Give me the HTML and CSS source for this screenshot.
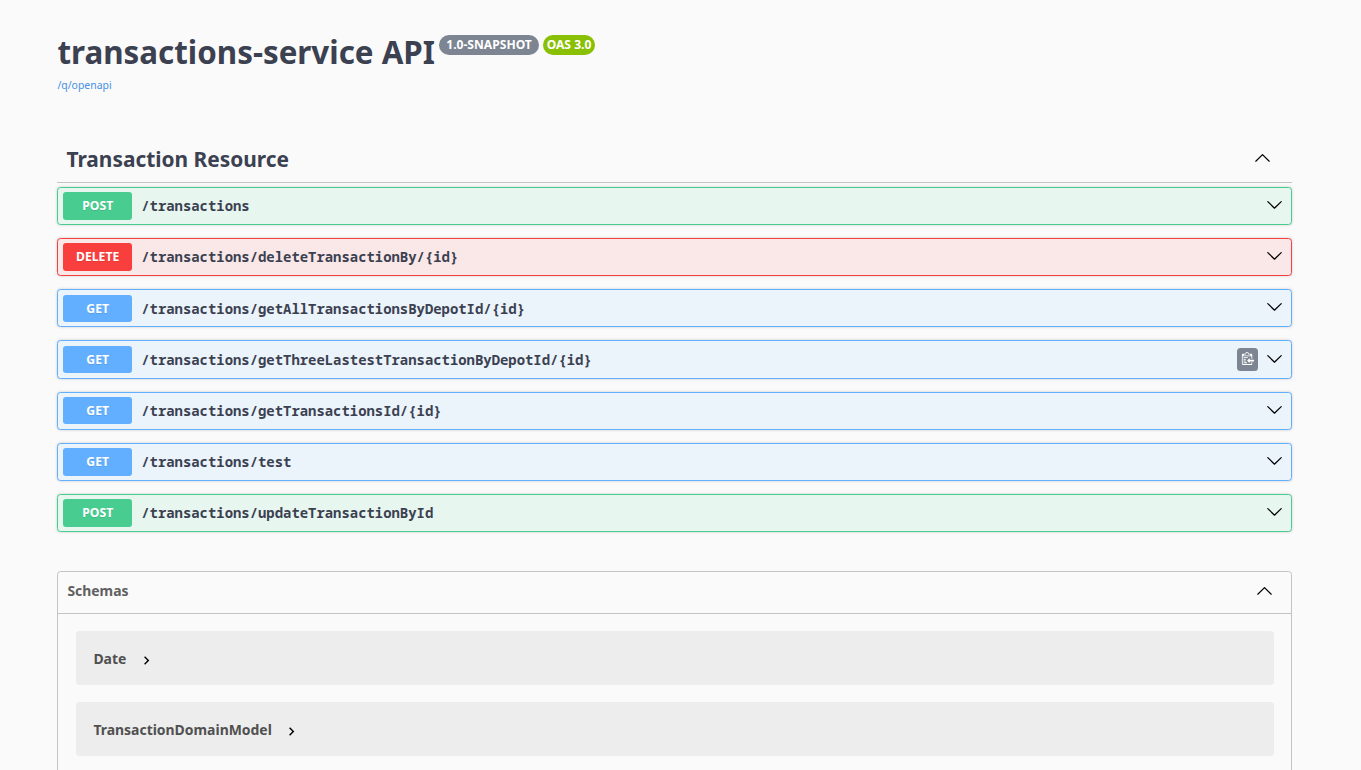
FILE: index.html
```
<!DOCTYPE html>
<html lang="en">
<head>
<meta charset="utf-8">
<title>transactions-service API</title>
<link rel="stylesheet" href="styles.css">
</head>
<body>
<svg class="defs" aria-hidden="true">
  <symbol id="down" viewBox="0 0 20 20"><path d="M17.418 6.109c.272-.268.709-.268.979 0s.271.701 0 .969l-7.908 7.83c-.27.268-.707.268-.979 0l-7.908-7.83c-.27-.268-.27-.701 0-.969s.709-.268.979 0L10 13.25l7.418-7.141z"/></symbol>
  <symbol id="up" viewBox="0 0 20 20"><path d="M17.418 14.908c.272.27.709.27.979 0s.271-.697 0-.969l-7.908-7.83c-.27-.268-.707-.268-.979 0l-7.908 7.83c-.27.268-.27.701 0 .969s.709.268.979 0L10 7.767l7.418 7.141z"/></symbol>
  <symbol id="next" viewBox="0 0 24 24"><path d="M10 6L8.59 7.41 13.17 12l-4.58 4.59L10 18l6-6z"/></symbol>
</svg>
<main class="wrapper">
  <header class="info">
    <h1 class="title">transactions-service API</h1>
    <span class="badge badge-version">1.0-SNAPSHOT</span>
    <span class="badge badge-oas">OAS 3.0</span>
  </header>
  <a class="spec-link">/q/openapi</a>

  <section class="tag">
    <h2 class="tag-head"><span>Transaction Resource</span><svg class="arrow"><use href="#up"/></svg></h2>
    <div class="op post"><span class="method">POST</span><span class="path">/transactions</span><svg class="arrow"><use href="#down"/></svg></div>
    <div class="op delete"><span class="method">DELETE</span><span class="path">/transactions/deleteTransactionBy/{id}</span><svg class="arrow"><use href="#down"/></svg></div>
    <div class="op get"><span class="method">GET</span><span class="path">/transactions/getAllTransactionsByDepotId/{id}</span><svg class="arrow"><use href="#down"/></svg></div>
    <div class="op get"><span class="method">GET</span><span class="path">/transactions/getThreeLastestTransactionByDepotId/{id}</span><button class="copy" aria-label="Copy"><svg viewBox="0 0 15 16"><path transform="translate(1)" d="M2 13h4v1H2v-1zm5-6H2v1h5V7zm2 3V8l-3 3 3 3v-2h5v-2H9zM4.5 9H2v1h2.5V9zM2 12h2.5v-1H2v1zm9 1h1v2c-.02.28-.11.52-.3.7-.19.18-.42.28-.7.3H1c-.55 0-1-.45-1-1V4c0-.55.45-1 1-1h3c0-1.11.89-2 2-2 1.11 0 2 .89 2 2h3c.55 0 1 .45 1 1v5h-1V6H1v9h10v-2zM2 5h8c0-.55-.45-1-1-1H8c-.55 0-1-.45-1-1s-.45-1-1-1-1 .45-1 1-.45 1-1 1H3c-.55 0-1 .45-1 1z"/></svg></button><svg class="arrow"><use href="#down"/></svg></div>
    <div class="op get"><span class="method">GET</span><span class="path">/transactions/getTransactionsId/{id}</span><svg class="arrow"><use href="#down"/></svg></div>
    <div class="op get"><span class="method">GET</span><span class="path">/transactions/test</span><svg class="arrow"><use href="#down"/></svg></div>
    <div class="op post"><span class="method">POST</span><span class="path">/transactions/updateTransactionById</span><svg class="arrow"><use href="#down"/></svg></div>
  </section>

  <section class="models">
    <h3 class="models-head"><span>Schemas</span><svg class="arrow"><use href="#up"/></svg></h3>
    <div class="model"><span>Date</span><svg class="toggle"><use href="#next"/></svg></div>
    <div class="model"><span>TransactionDomainModel</span><svg class="toggle"><use href="#next"/></svg></div>
  </section>
</main>
</body>
</html>
```
FILE: styles.css
```
* { box-sizing: border-box; }
html { overflow: hidden; }
body {
  margin: 0;
  height: 770px;
  overflow: hidden;
  background: #fafafa;
  color: #3b4151;
  font-family: "Noto Sans", sans-serif;
}
h1, h2, h3 { margin: 0; }
.defs { display: none; }
.wrapper { width: 1234.6px; height: 770px; margin-left: 57.4px; padding-top: 30px; }

.info { display: flex; height: 44px; align-items: flex-start; }
.title { font-size: 31.35px; line-height: 44px; font-weight: 700; white-space: nowrap; }
.badge {
  height: 20px;
  margin: 5px 0 0 4px;
  border-radius: 10px;
  color: #fff;
  font-size: 12.1px;
  font-weight: 700;
  line-height: 19px;
  text-align: center;
  white-space: nowrap;
}
.badge-version { width: 100px; background: #7d8492; }
.badge-oas { width: 52px; background: #89bf04; }
.spec-link { display: block; height: 16px; margin-top: 3px; font-size: 10.45px; line-height: 16px; color: #4990e2; }

.arrow { width: 17px; height: 17px; flex: none; margin-bottom: 2.6px; fill: #000; }
.tag { margin-top: 43px; }
.tag-head {
  display: flex;
  height: 47px;
  margin-bottom: 3.8px;
  padding: 0 21px 0 9px;
  align-items: center;
  justify-content: space-between;
  border-bottom: 1px solid #c2c3c6;
  font-size: 20.9px;
}
.op {
  display: flex;
  height: 38.2px;
  margin-bottom: 13px;
  padding: 0 7.8px 0 5px;
  align-items: center;
  border: 1px solid;
  border-radius: 3.5px;
  box-shadow: 0 0 3px rgba(0, 0, 0, .19);
}
.method {
  width: 69px;
  height: 27.5px;
  border-radius: 3px;
  color: #fff;
  font-size: 12.18px;
  font-weight: 700;
  line-height: 27px;
  text-align: center;
  text-indent: -.4px;
  text-shadow: 0 1px 0 rgba(0, 0, 0, .1);
}
.path {
  flex: 1;
  padding: 0 0 .5px 8.8px;
  font-family: "Noto Sans Mono", "DejaVu Sans Mono", monospace;
  font-size: 13.92px;
  font-weight: 700;
}
.post { background: #e8f6f0; border-color: #49cc90; }
.post .method { background: #49cc90; }
.delete { background: #fae7e7; border-color: #f93e3e; }
.delete .method { background: #f93e3e; }
.get { background: #ebf3fb; border-color: #61affe; }
.get .method { background: #61affe; }
.copy {
  display: flex;
  width: 21px;
  height: 23px;
  margin-right: 8px;
  padding: 0 0 2px 0;
  align-items: center;
  justify-content: center;
  border: 0;
  border-radius: 3.5px;
  background: #7d8492;
}
.copy svg { width: 13px; height: 14px; fill: #fff; }

.models { height: 260px; margin-top: 39.2px; border: 1px solid #c2c3c6; border-radius: 3.5px; }
.models-head {
  display: flex;
  height: 42px;
  margin-bottom: 17px;
  padding: 0 18px 3px 9px;
  align-items: center;
  justify-content: space-between;
  border-bottom: 1px solid #c2c3c6;
  color: #606060;
  font-size: 13.92px;
}
.models-head span { padding-bottom: 2px; }
.models-head .arrow { margin-bottom: 1px; }
.model {
  display: flex;
  height: 54px;
  margin: 0 17px 17px 18px;
  padding: 0 17px;
  align-items: center;
  border-radius: 3.5px;
  background: #ededed;
  color: #505050;
  font-size: 13.95px;
  font-weight: 700;
}
.toggle { width: 17px; height: 17px; margin: 4px 0 0 11.5px; }
```
